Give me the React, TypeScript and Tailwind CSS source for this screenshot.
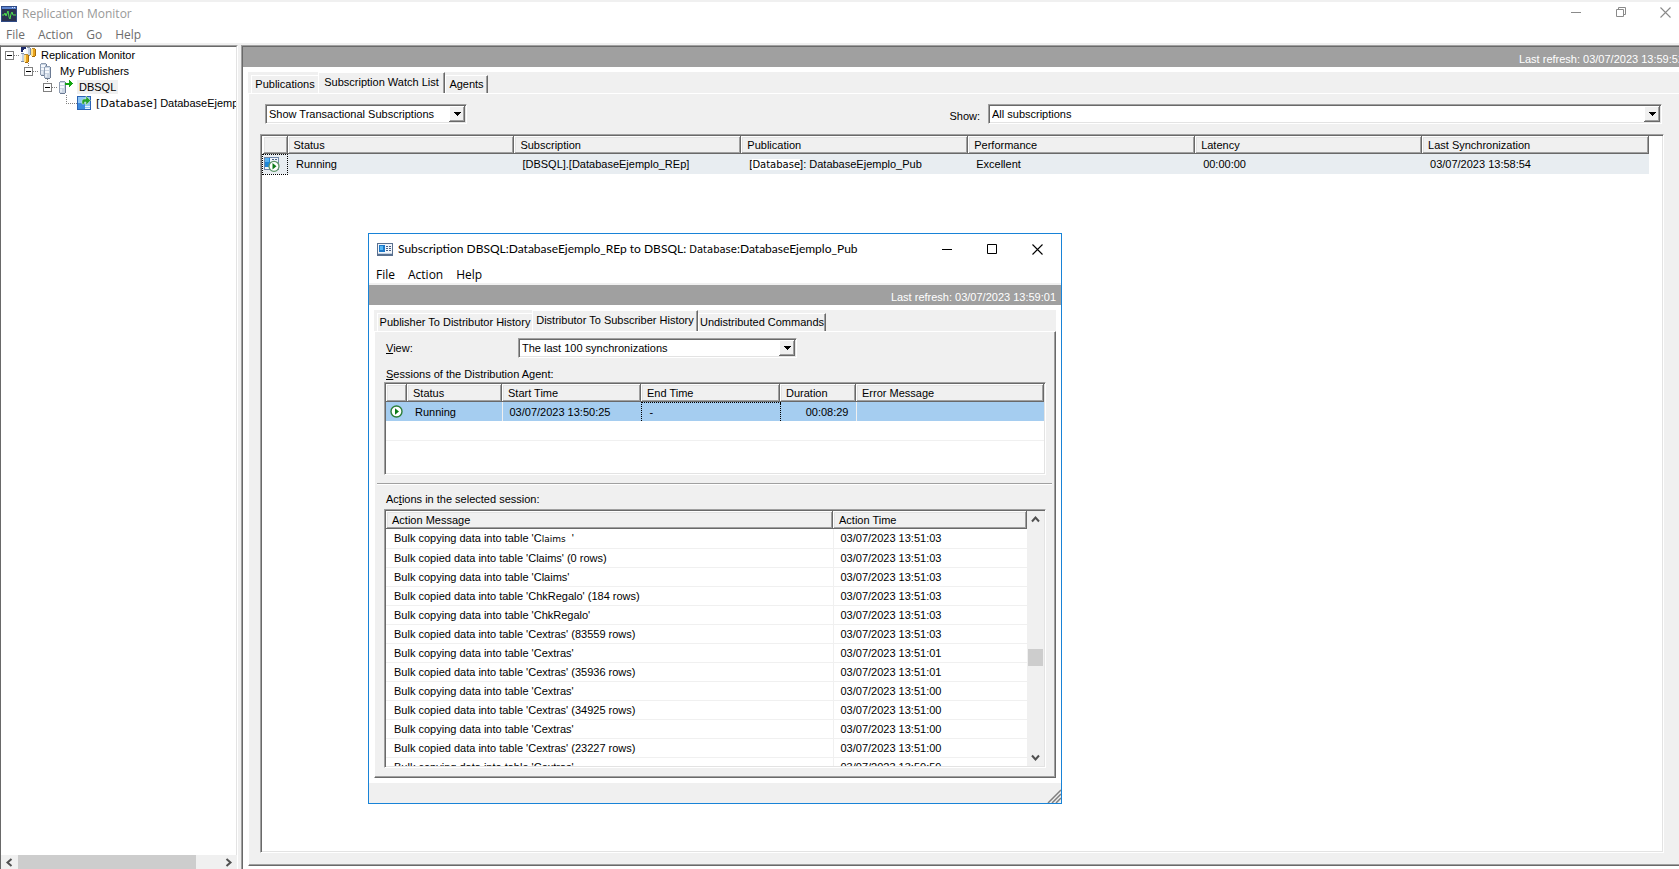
import { ReactNode } from 'react';
import clsx from 'clsx';

const sunken =
  'border border-t-[#a0a0a0] border-l-[#a0a0a0] border-r-white border-b-white shadow-[inset_1px_1px_0_#696969,inset_-1px_-1px_0_#e3e3e3] p-px bg-white';
const headCell =
  'h-[18px] bg-[#f0f0f0] text-left font-normal p-0 pl-[6px] shadow-[inset_-1px_-1px_0_#696969,inset_1px_1px_0_#fff,inset_-2px_-2px_0_#a0a0a0,inset_2px_2px_0_#e3e3e3]';

const actions = [
  ["Bulk copied data into table 'Claims' (0 rows)", '03/07/2023 13:51:03'],
  ["Bulk copying data into table 'Claims'", '03/07/2023 13:51:03'],
  ["Bulk copied data into table 'ChkRegalo' (184 rows)", '03/07/2023 13:51:03'],
  ["Bulk copying data into table 'ChkRegalo'", '03/07/2023 13:51:03'],
  ["Bulk copied data into table 'Cextras' (83559 rows)", '03/07/2023 13:51:03'],
  ["Bulk copying data into table 'Cextras'", '03/07/2023 13:51:01'],
  ["Bulk copied data into table 'Cextras' (35936 rows)", '03/07/2023 13:51:01'],
  ["Bulk copying data into table 'Cextras'", '03/07/2023 13:51:00'],
  ["Bulk copied data into table 'Cextras' (34925 rows)", '03/07/2023 13:51:00'],
  ["Bulk copying data into table 'Cextras'", '03/07/2023 13:51:00'],
  ["Bulk copied data into table 'Cextras' (23227 rows)", '03/07/2023 13:51:00'],
  ["Bulk copying data into table 'Cextras'", '03/07/2023 13:50:59'],
];

/* ---------- icons ---------- */

function MonitorIcon() {
  return (
    <svg width="16" height="16" viewBox="0 0 16 16" shapeRendering="crispEdges">
      <rect width="16" height="16" fill="#2f4a86" />
      <rect x="1" y="1" width="14" height="2" fill="#5b83cf" />
      <path d="M11 1h1v1h-1zM13 1h1v1h-1z" fill="#dce8ff" />
      <rect x="1" y="3" width="14" height="12" fill="#2b3350" />
      <path d="M1 9h2l1-2 1 3 2-5 1 6 1 2 1-5 1-2 1 3h3" fill="none" stroke="#4fe04f" shapeRendering="auto" />
    </svg>
  );
}

function Cylinder({ x, y, gold }: { x: number; y: number; gold?: boolean }) {
  return (
    <g transform={`translate(${x} ${y})`}>
      <rect y="1" width="5" height="7" fill={gold ? '#e9a41c' : '#c3cfdf'} />
      <rect y="1" width="2" height="7" fill={gold ? '#ffe08a' : '#f2f6fb'} />
      <rect x="4" y="1" width="1" height="7" fill={gold ? '#a86c08' : '#7d8da6'} />
      <rect x="1" width="3" height="1" fill={gold ? '#b98a2c' : '#8896ac'} />
      <rect x="1" y="8" width="3" height="1" fill={gold ? '#a86c08' : '#7d8da6'} />
    </g>
  );
}

function RootIcon() {
  return (
    <svg className="shrink-0" width="16" height="16" viewBox="0 0 16 16" shapeRendering="crispEdges">
      <path d="M1 0h5v2H4v1H3v2H1z" fill="#1b2a6b" />
      <Cylinder x={6} y={0} />
      <Cylinder x={11} y={1} gold />
      <Cylinder x={0} y={6} />
      <Cylinder x={4} y={7} gold />
    </svg>
  );
}

function ServerShape({ x, y }: { x: number; y: number }) {
  return (
    <g transform={`translate(${x} ${y})`}>
      <rect x="0" y="1" width="6" height="11" fill="#c9d4e2" />
      <rect x="1" y="0" width="5" height="1" fill="#8f9db2" />
      <rect x="0" y="1" width="1" height="11" fill="#8f9db2" />
      <rect x="6" y="1" width="1" height="11" fill="#6b7b94" />
      <rect x="1" y="2" width="4" height="2" fill="#f5f8fc" />
      <rect x="1" y="5" width="4" height="2" fill="#f5f8fc" />
      <rect x="1" y="8" width="2" height="3" fill="#e4ebf4" />
      <rect x="1" y="12" width="5" height="1" fill="#6b7b94" />
    </g>
  );
}

function PublishersIcon() {
  return (
    <svg className="shrink-0" width="16" height="16" viewBox="0 0 16 16" shapeRendering="crispEdges">
      <ServerShape x={1} y={0} />
      <ServerShape x={5} y={3} />
    </svg>
  );
}

function ServerIcon() {
  return (
    <svg className="shrink-0" width="16" height="16" viewBox="0 0 16 16" shapeRendering="crispEdges">
      <ServerShape x={1} y={2} />
      <path d="M7 4h4V1h1v1h1v1h1v1h1v1h-1v1h-1v1h-1v1h-1V6H7z" fill="#12a512" />
    </svg>
  );
}

function PublicationIcon() {
  return (
    <svg className="shrink-0" width="14" height="16" viewBox="0 0 14 16">
      <rect x="0" y="1" width="14" height="14" fill="#2a62b4" />
      <rect x="1" y="2" width="12" height="12" fill="#8fc6f5" />
      <path d="M1 8h7v6H1z" fill="#3c8be0" />
      <path d="M8 11h5v1H8zM8 13h5v1H8z" fill="#e6f2ff" />
      <path d="M5 9V6q0-2 2-2h2V1l4.500 4.500L9 10V7H7.500v2z" fill="#23a030" stroke="#d8f5c8" strokeWidth=".5" />
    </svg>
  );
}

function RunningIcon() {
  return (
    <svg width="13" height="13" viewBox="0 0 13 13">
      <circle cx="6.5" cy="6.5" r="5.5" fill="#fff" stroke="#2c7f38" strokeWidth="1.4" />
      <path d="M5 3.2v6.6l4-3.3z" fill="#0b7a16" />
    </svg>
  );
}

function SubscriptionIcon() {
  return (
    <svg width="16" height="15" viewBox="0 0 16 15">
      <rect x=".5" y=".5" width="14" height="12" fill="#eef4fb" stroke="#6f86a8" />
      <rect x="1" y="1" width="5" height="9" fill="#1d86d8" />
      <rect x="1" y="1" width="4" height="4" fill="#57b4f2" />
      <path d="M8 2.5h2M11 2.5h2" stroke="#4a5f84" />
      <circle cx="10" cy="9.3" r="5" fill="#fff" stroke="#5d9468" strokeWidth="1.3" />
      <path d="M8.5 6v6.6l4-3.3z" fill="#0b7a16" />
    </svg>
  );
}

function DialogIcon() {
  return (
    <svg width="16" height="13" viewBox="0 0 16 13" shapeRendering="crispEdges">
      <rect width="16" height="13" fill="#59708f" />
      <rect x="1" y="1" width="14" height="10" fill="#f2f6fb" />
      <rect x="2" y="2" width="6" height="7" fill="#1c78c8" />
      <rect x="3" y="3" width="3" height="4" fill="#55b8f5" />
      <path d="M9 3h2v1H9zM12 3h2v1h-2zM9 5h2v1H9zM12 5h2v1h-2zM9 7h2v1H9zM12 7h2v1h-2z" fill="#4a5f84" />
      <path d="M1 10h14v1H1z" fill="#c5d2e2" />
    </svg>
  );
}

function Chevron({ d }: { d: string }) {
  return (
    <svg width="9" height="9" viewBox="0 0 9 9">
      <path d={d} fill="none" stroke="#505050" strokeWidth="2" />
    </svg>
  );
}

/* ---------- building blocks ---------- */

function WindowButtons({ dialog }: { dialog?: boolean }) {
  return (
    <div className={clsx('flex', dialog ? 'text-black' : 'text-[#8a8a8a]')}>
      <button aria-label="Minimize" className="flex h-7 w-[46px] items-center justify-center">
        <svg width="10" height="10" viewBox="0 0 10 10"><path d="M0 5.5h10" stroke="currentColor" /></svg>
      </button>
      <button aria-label="Maximize" className="flex h-7 w-[44px] items-center justify-center">
        <svg width="10" height="10" viewBox="0 0 10 10" fill="none" stroke="currentColor">
          {dialog ? <path d="M.5.5h9v9h-9z" /> : <path d="M.5 2.5h7v7h-7zM2.5 2V.5h7v7H8" />}
        </svg>
      </button>
      <button aria-label="Close" className={clsx('flex h-7 items-center', dialog ? 'w-[47px] justify-center' : 'w-9 justify-end pr-2')}>
        <svg width="11" height="11" viewBox="0 0 11 11"><path d="M.5.5l10 10M10.5.5l-10 10" stroke="currentColor" strokeWidth="1.1" /></svg>
      </button>
    </div>
  );
}

function Combo({ id, value, className }: { id: string; value: string; className?: string }) {
  return (
    <div className={clsx(sunken, 'relative h-5', className)}>
      <select id={id} aria-label={value} className="block h-4 w-full appearance-none bg-white pl-[2px] leading-4 outline-none">
        <option>{value}</option>
      </select>
      <span className="pointer-events-none absolute top-px right-px flex h-4 w-4 items-center justify-center bg-[#f0f0f0] shadow-[inset_-1px_-1px_0_#696969,inset_1px_1px_0_#fff,inset_-2px_-2px_0_#a0a0a0]">
        <svg width="7" height="4" viewBox="0 0 7 4" shapeRendering="crispEdges"><path d="M0 0h7v1H6v1H5v1H4v1H3V3H2V2H1V1H0z" /></svg>
      </span>
    </div>
  );
}

type TabProps = { children: ReactNode; width: string; active?: boolean; last?: boolean };

function Tab({ children, width, active, last }: TabProps) {
  return (
    <button
      role="tab"
      aria-selected={!!active}
      className={clsx(
        'border-t border-l border-white bg-[#f0f0f0] text-center whitespace-nowrap',
        width,
        active ? 'h-[21px] pb-[3px]' : 'h-[18px] pb-px',
        (active || last) && 'border-r border-r-[#696969] shadow-[inset_-1px_0_0_#a0a0a0]',
      )}
    >
      {children}
    </button>
  );
}

type NodeProps = { level: number; icon: ReactNode; children: ReactNode; leaf?: boolean; selected?: boolean };

const indents = ['pl-0', 'pl-[19px]', 'pl-[38px]', 'pl-[57px]'];

function TreeNode({ level, icon, children, leaf, selected }: NodeProps) {
  return (
    <li className={clsx('flex h-4 items-center whitespace-nowrap', indents[level])}>
      <button aria-label="Toggle" className="h-4 w-[19px] shrink-0">
        <svg width="19" height="16" viewBox="0 0 19 16" shapeRendering="crispEdges">
          {level > 0 && <path d={leaf ? 'M8.5 0v9' : 'M8.5 0v4'} stroke="#808080" strokeDasharray="1 1" />}
          <path d={leaf ? 'M8 8.5h11' : 'M13 8.5h6'} stroke="#808080" strokeDasharray="1 1" />
          {!leaf && (
            <>
              <rect x="4.5" y="4.5" width="8" height="8" fill="#fff" stroke="#808080" />
              <path d="M6 8.5h5" stroke="#000" />
            </>
          )}
        </svg>
      </button>
      {icon}
      <span className={clsx('ml-[3px] px-[2px]', selected && 'bg-[#f0f0f0]')}>{children}</span>
    </li>
  );
}

function Menu({ items, className }: { items: string[]; className?: string }) {
  return (
    <nav className={clsx('flex font-["Open_Sans",sans-serif] text-[12px] leading-4', className)}>
      {items.map((item) => (
        <button key={item}>{item}</button>
      ))}
    </nav>
  );
}

/* ---------- subscription dialog ---------- */

function SubscriptionDialog() {
  return (
    <section className="absolute top-[231px] left-[368px] flex h-[571px] w-[694px] flex-col border border-[#1883d7] bg-white">
      <header className="flex h-[30px] items-center pl-2">
        <DialogIcon />
        <h2 className="ml-[5px] flex-1 font-[Lato,sans-serif] text-[12px] whitespace-pre">
          Subscription DBSQL:DatabaseEjemplo_REp to DBSQL:{' '}
          <span className='font-["DejaVu_Sans",sans-serif] text-[10px]'>Database</span>:DatabaseEjemplo_Pub
        </h2>
        <WindowButtons dialog />
      </header>
      <Menu items={['File', 'Action', 'Help']} className="h-[19px] items-end gap-[13px] pl-[7px]" />
      <div className="flex h-[22px] items-center justify-end border-t-2 border-[#f0f0f0] bg-[#a0a0a0] pt-1 pr-[5px] text-white">
        Last refresh: 03/07/2023 13:59:01
      </div>

      <div className="mt-[5px] ml-[5px] mr-[5px] flex min-h-0 flex-1 flex-col bg-[#f0f0f0]">
        <div role="tablist" className="flex h-[21px] items-end pl-[3px]">
          <Tab width="w-[155px]">Publisher To Distributor History</Tab>
          <Tab width="w-[166px]" active>Distributor To Subscriber History</Tab>
          <Tab width="w-[128px]" last>Undistributed Commands</Tab>
        </div>
        <div className="flex min-h-0 flex-1 flex-col border border-t-white border-r-[#696969] border-b-[#696969] border-l-white shadow-[inset_-1px_-1px_0_#a0a0a0]">
          <div className="mt-[6px] flex items-center pl-[11px]">
            <label htmlFor="view" className="w-[132px]"><u>V</u>iew:</label>
            <Combo id="view" value="The last 100 synchronizations" className="w-[279px]" />
          </div>
          <p className="mt-2 h-4 pl-[11px] leading-4"><u>S</u>essions of the Distribution Agent:</p>
          <div className={clsx(sunken, 'mr-[9px] ml-[9px] h-[93px] shrink-0')}>
            <table className="w-full table-fixed border-collapse">
              <colgroup>
                <col className="w-[21px]" /><col className="w-[95px]" /><col className="w-[139px]" />
                <col className="w-[139px]" /><col className="w-[76px]" /><col />
              </colgroup>
              <thead>
                <tr>
                  <th className={headCell} />
                  {['Status', 'Start Time', 'End Time', 'Duration', 'Error Message'].map((h) => (
                    <th key={h} className={headCell}>{h}</th>
                  ))}
                </tr>
              </thead>
              <tbody>
                <tr className="h-[19px] bg-[#a5cdf0]">
                  <td className="pl-1"><RunningIcon /></td>
                  <td className="pl-2">Running</td>
                  <td className="border-l border-[#f0f0f0] pl-[7px]">03/07/2023 13:50:25</td>
                  <td className="border-t border-l border-dotted border-black pl-2">-</td>
                  <td className="border-l border-dotted border-black pr-[7px] text-right">00:08:29</td>
                  <td className="border-l border-[#f0f0f0]" />
                </tr>
                <tr className="h-[19px] border-b border-[#f0f0f0]"><td colSpan={6} /></tr>
              </tbody>
            </table>
          </div>

          <hr className="mt-2 mr-[3px] ml-[2px] h-[2px] border-t border-b border-t-[#a0a0a0] border-b-white" />

          <p className="mt-[6px] h-[18px] pl-[11px] leading-4">Ac<u>t</u>ions in the selected session:</p>
          <div className={clsx(sunken, 'mr-[9px] mb-[9px] ml-[9px] flex min-h-0 flex-1')}>
            <div className="flex-1 overflow-hidden">
              <table className="w-full table-fixed border-collapse">
                <colgroup><col /><col className="w-[194px]" /></colgroup>
                <thead>
                  <tr><th className={headCell}>Action Message</th><th className={headCell}>Action Time</th></tr>
                </thead>
                <tbody>
                  <tr className="h-[19px] border-b border-[#f0f0f0]">
                    <td className="pl-2 whitespace-pre">
                      Bulk copying data into table 'C<span className='font-["DejaVu_Sans",sans-serif] text-[9px] leading-3'>laims</span>{'  '}'
                    </td>
                    <td className="border-l border-[#f0f0f0] pl-[7px]">03/07/2023 13:51:03</td>
                  </tr>
                  {actions.map(([message, time], i) => (
                    <tr key={i} className="h-[19px] border-b border-[#f0f0f0]">
                      <td className="pl-2">{message}</td>
                      <td className="border-l border-[#f0f0f0] pl-[7px]">{time}</td>
                    </tr>
                  ))}
                </tbody>
              </table>
            </div>
            <div className="flex w-[17px] flex-col items-center bg-[#f0f0f0]">
              <button aria-label="Scroll up" className="flex h-[17px] items-center"><Chevron d="M1 6.5l3.5-4 3.5 4" /></button>
              <div className="mt-[121px] h-[17px] w-[15px] bg-[#cdcdcd]" />
              <button aria-label="Scroll down" className="mt-auto flex h-[17px] items-center"><Chevron d="M1 2.5l3.5 4 3.5-4" /></button>
            </div>
          </div>
        </div>
      </div>

      <footer className="mt-[5px] flex h-5 shrink-0 items-end justify-end bg-[#f0f0f0]">
        <svg width="14" height="14" viewBox="0 0 14 14">
          <path d="M1 14L14 1M5 14l9-9M9 14l5-5" stroke="#808080" strokeWidth="1.5" />
        </svg>
      </footer>
    </section>
  );
}

export default function App() {
  return (
    <div className='relative flex h-screen flex-col overflow-hidden border-t-2 border-[#f0f0f0] bg-white font-["Liberation_Sans",Arial,sans-serif] text-[11px] leading-[14px] text-black'>
      <header className="flex h-6 items-center pl-px text-[#999]">
        <MonitorIcon />
        <h1 className='ml-[5px] flex-1 font-["Open_Sans",sans-serif] text-[12px]'>Replication Monitor</h1>
        <div className="pb-1"><WindowButtons /></div>
      </header>
      <Menu items={['File', 'Action', 'Go', 'Help']} className="h-[17px] items-center gap-[13px] pl-[6px] text-[#6d6d6d]" />

      <main className="flex min-h-0 flex-1 border-t-2 border-[#f0f0f0] bg-[#f0f0f0]">
        <aside className="flex w-[238px] shrink-0 flex-col border-t border-r border-l border-t-[#a0a0a0] border-r-white border-l-[#696969] bg-white">
          <ul className="flex-1 overflow-hidden border-t border-r border-t-[#696969] border-r-[#e3e3e3]">
            <TreeNode level={0} icon={<RootIcon />}>Replication Monitor</TreeNode>
            <TreeNode level={1} icon={<PublishersIcon />}>My Publishers</TreeNode>
            <TreeNode level={2} icon={<ServerIcon />} selected>DBSQL</TreeNode>
            <TreeNode level={3} icon={<PublicationIcon />} leaf>
              <span className='font-["DejaVu_Sans",sans-serif]'>[Database]</span> DatabaseEjemplo_Pub
            </TreeNode>
          </ul>
          <div className="flex h-[14px] bg-[#f0f0f0]">
            <button aria-label="Scroll left" className="flex w-[17px] items-center justify-center"><Chevron d="M6.5 1l-4 3.5 4 3.5" /></button>
            <div className="h-full w-[178px] bg-[#cdcdcd]" />
            <button aria-label="Scroll right" className="ml-auto flex w-[17px] items-center justify-center"><Chevron d="M2.5 1l4 3.5-4 3.5" /></button>
          </div>
        </aside>

        <section className="ml-[3px] flex min-w-0 flex-1 flex-col border-t border-l border-[#a0a0a0] bg-white">
          <div className="flex min-h-0 flex-1 flex-col border-t border-l border-[#696969]">
            <div className="flex h-5 items-center justify-end overflow-hidden bg-[#a0a0a0] pt-[3px] text-white">
              <span className="-mr-[5px]">Last refresh: 03/07/2023 13:59:52</span>
            </div>
            <div className="mt-[5px] mb-[3px] ml-[5px] flex min-h-0 flex-1 flex-col bg-[#f0f0f0]">
              <div role="tablist" className="flex h-[21px] items-end pl-[3px]">
                <Tab width="w-[67px]">Publications</Tab>
                <Tab width="w-[127px]" active>Subscription Watch List</Tab>
                <Tab width="w-[43px]" last>Agents</Tab>
              </div>
              <div className="flex min-h-0 flex-1 flex-col border-t border-b border-l border-t-white border-b-[#696969] border-l-white pr-[15px] pb-3 pl-[11px] shadow-[inset_0_-1px_0_#a0a0a0]">
                <div className="mt-[10px] flex items-center justify-between pr-[2px] pl-[5px]">
                  <Combo id="kind" value="Show Transactional Subscriptions" className="w-[202px]" />
                  <div className="flex items-center">
                    <label htmlFor="show" className="mr-2 pt-1">Show:</label>
                    <Combo id="show" value="All subscriptions" className="w-[674px]" />
                  </div>
                </div>
                <div className={clsx(sunken, 'mt-[10px] min-h-0 flex-1 pr-[14px]')}>
                  <table className="w-full table-fixed border-collapse">
                    <colgroup><col className="w-[25px]" /><col /><col /><col /><col /><col /><col /></colgroup>
                    <thead>
                      <tr>
                        <th className={headCell} />
                        {['Status', 'Subscription', 'Publication', 'Performance', 'Latency', 'Last Synchronization'].map((h) => (
                          <th key={h} className={headCell}>{h}</th>
                        ))}
                      </tr>
                    </thead>
                    <tbody>
                      <tr className="h-5 bg-[#e8edf1]">
                        <td className="border border-dotted border-black pl-px"><SubscriptionIcon /></td>
                        <td className="pl-2">Running</td>
                        <td className="pl-2">[DBSQL].[DatabaseEjemplo_REp]</td>
                        <td className="pl-2">
                          [<span className='bg-white font-["DejaVu_Sans",sans-serif] text-[10px]'>Database</span>]: DatabaseEjemplo_Pub
                        </td>
                        <td className="pl-2">Excellent</td>
                        <td className="pl-2">00:00:00</td>
                        <td className="pl-2">03/07/2023 13:58:54</td>
                      </tr>
                    </tbody>
                  </table>
                </div>
              </div>
            </div>
          </div>
        </section>
      </main>

      <SubscriptionDialog />
    </div>
  );
}
